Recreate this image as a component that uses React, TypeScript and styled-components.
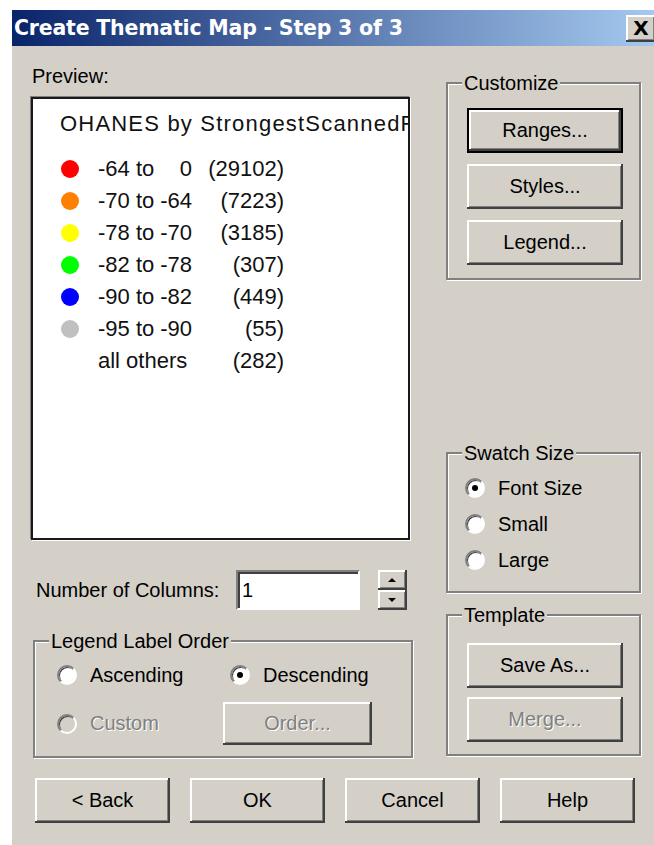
import React from 'react'
import styled, { createGlobalStyle } from 'styled-components'

const GlobalStyle = createGlobalStyle`
  html, body {
    margin: 0;
    padding: 0;
    background: #ffffff;
    overflow: hidden;
  }
`

const FACE = '#d4d0c8'
const SHADOW = '#808080'
const DARK = '#404040'
const UI_FONT = `"Liberation Sans", Arial, sans-serif`

const Dialog = styled.div`
  margin: 10px 0 0 12px;
  width: 648px;
  height: 835px;
  background: ${FACE};
  font-family: ${UI_FONT};
  font-size: 20px;
  color: #000;
`

// TITLE BAR

const TitleBar = styled.div`
  height: 36px;
  display: flex;
  align-items: center;
  padding: 0 4px 0 2px;
  background: linear-gradient(to right, #0a246a, #a6caf0);
`

const TitleText = styled.div`
  color: #ffffff;
  font-family: "DejaVu Sans", Tahoma, sans-serif;
  font-weight: bold;
  font-size: 20.5px;
  letter-spacing: -0.2px;
`

const CloseButton = styled.div`
  margin-left: auto;
  width: 30px;
  height: 27px;
  box-sizing: border-box;
  display: flex;
  align-items: center;
  justify-content: center;
  background: ${FACE};
  font-family: "DejaVu Sans", sans-serif;
  font-weight: bold;
  font-size: 20px;
  box-shadow: inset -2px -2px 0 ${DARK}, inset 2px 2px 0 #ffffff, inset -3px -3px 0 ${SHADOW};
`

// BODY

const Body = styled.div`
  display: flex;
  flex-direction: column;
  padding-left: 19px;
`

const Main = styled.div`
  display: grid;
  grid-template-columns: 382px 195px;
  column-gap: 33px;
  align-items: start;
`

const LeftColumn = styled.div`
  display: flex;
  flex-direction: column;
`

const RightColumn = styled.div`
  display: flex;
  flex-direction: column;
`

const PreviewLabel = styled.div`
  margin-top: 19px;
  padding-left: 1px;
  line-height: 22px;
`

const PreviewBox = styled.div`
  margin-top: 10px;
  width: 379px;
  height: 443px;
  box-sizing: border-box;
  background: #ffffff;
  border: 2px solid #1a1a1a;
  box-shadow: -1px -1px 0 ${SHADOW}, 1px 1px 0 #ffffff;
  padding: 14px 0 0 27px;
  overflow: hidden;
  font-size: 22px;
  color: #111;
`

const LegendTitle = styled.div`
  line-height: 22px;
  white-space: nowrap;
  letter-spacing: 1.2px;
  margin-bottom: 18px;
`

// swatch | range (from, to) | count, right aligned
const LegendRow = styled.div`
  display: grid;
  grid-template-columns: 37px 94px 92px;
  align-items: center;
  height: 32px;
  margin-left: 1px;
  white-space: nowrap;
`

const Swatch = styled.div<{ $color?: string }>`
  width: 18px;
  height: 18px;
  border-radius: 50%;
  background: ${(p) => p.$color ?? 'transparent'};
`

const Range = styled.div`
  display: flex;
  justify-content: space-between;
`

const Count = styled.div`
  text-align: right;
`

const ColumnsRow = styled.div`
  margin-top: 30px;
  height: 40px;
  display: flex;
  align-items: center;
`

const ColumnsLabel = styled.div`
  width: 200px;
  padding-left: 5px;
  white-space: nowrap;
`

const NumberInput = styled.div`
  width: 124px;
  height: 40px;
  box-sizing: border-box;
  background: #ffffff;
  border: 2px solid;
  border-color: ${SHADOW} #ffffff #ffffff ${SHADOW};
  box-shadow: inset 2px 2px 0 ${DARK};
  display: flex;
  align-items: center;
  padding-left: 4px;
`

const Spinner = styled.div`
  margin-left: 18px;
  width: 29px;
  display: flex;
  flex-direction: column;
`

const SpinButton = styled.div<{ $down?: boolean }>`
  height: 20px;
  display: flex;
  align-items: center;
  justify-content: center;
  background: ${FACE};
  box-shadow: inset -2px -2px 0 ${DARK}, inset 2px 2px 0 #ffffff, inset -3px -3px 0 ${SHADOW};

  &::after {
    content: '';
    width: 0;
    height: 0;
    border-left: 4px solid transparent;
    border-right: 4px solid transparent;
    ${(p) => (p.$down ? 'border-top: 4px solid #000;' : 'border-bottom: 4px solid #000;')}
    margin-right: 2px;
  }
`

// GROUP BOXES

const GroupBox = styled.div<{ $top: number }>`
  position: relative;
  margin-top: ${(p) => p.$top}px;
  box-sizing: border-box;
  border: 2px solid ${SHADOW};
  box-shadow: inset 1px 1px 0 #ffffff, 1px 1px 0 #ffffff;
`

const OrderBox = styled(GroupBox)`
  margin-left: 2px;
  width: 380px;
`

const Caption = styled.span`
  position: absolute;
  top: -12px;
  left: 14px;
  padding: 0 2px;
  line-height: 22px;
  background: ${FACE};
  white-space: nowrap;
`

const ButtonStack = styled.div<{ $pad: string; $gap: number }>`
  display: flex;
  flex-direction: column;
  gap: ${(p) => p.$gap}px;
  padding: ${(p) => p.$pad};
`

const Button = styled.button<{ $default?: boolean; $w?: number; $h?: number }>`
  width: ${(p) => p.$w ?? 156}px;
  height: ${(p) => p.$h ?? 45}px;
  box-sizing: border-box;
  margin: 0;
  padding: 0;
  background: ${FACE};
  font-family: ${UI_FONT};
  font-size: 20px;
  color: #000;
  border: ${(p) => (p.$default ? '2px solid #000' : 'none')};
  box-shadow: inset -2px -2px 0 ${DARK}, inset 2px 2px 0 #ffffff, inset -3px -3px 0 ${SHADOW};

  &:disabled {
    color: ${SHADOW};
    text-shadow: 1px 1px 0 #ffffff;
  }
`

const RadioList = styled.div`
  display: flex;
  flex-direction: column;
  gap: 12px;
  padding: 22px 0 19px 17px;
`

const OrderGrid = styled.div`
  display: grid;
  grid-template-columns: 166px 149px;
  row-gap: 15px;
  align-items: center;
  padding: 21px 0 11px 22px;
`

const RadioItem = styled.label<{ $disabled?: boolean; $indent?: number }>`
  display: flex;
  align-items: center;
  gap: 13px;
  height: 24px;
  margin-left: ${(p) => p.$indent ?? 0}px;
  white-space: nowrap;
  color: ${(p) => (p.$disabled ? SHADOW : '#000')};
  text-shadow: ${(p) => (p.$disabled ? '1px 1px 0 #ffffff' : 'none')};
`

const RadioCircle = styled.span<{ $checked?: boolean; $disabled?: boolean }>`
  width: 20px;
  height: 20px;
  box-sizing: border-box;
  border-radius: 50%;
  border: 2px solid;
  border-color: ${SHADOW} #ffffff #ffffff ${SHADOW};
  box-shadow: inset 1px 1px 0 ${DARK};
  background: ${(p) => (p.$disabled ? FACE : '#ffffff')};
  display: flex;
  align-items: center;
  justify-content: center;

  &::after {
    content: '';
    width: 6px;
    height: 6px;
    border-radius: 50%;
    background: ${(p) => (p.$checked ? '#000' : 'transparent')};
  }
`

const Footer = styled.div`
  margin-top: 20px;
  margin-left: 4px;
  display: flex;
  gap: 20px;
`

type Radio = { label: string; checked?: boolean; disabled?: boolean }

const RadioOption = ({ label, checked, disabled, indent }: Radio & { indent?: number }) => (
  <RadioItem $disabled={disabled} $indent={indent}>
    <RadioCircle $checked={checked} $disabled={disabled} />
    {label}
  </RadioItem>
)

const legend = [
  { color: '#ff0000', from: '-64 to', to: '0', count: '(29102)' },
  { color: '#ff8000', from: '-70 to', to: '-64', count: '(7223)' },
  { color: '#ffff00', from: '-78 to', to: '-70', count: '(3185)' },
  { color: '#00ff00', from: '-82 to', to: '-78', count: '(307)' },
  { color: '#0000ff', from: '-90 to', to: '-82', count: '(449)' },
  { color: '#c0c0c0', from: '-95 to', to: '-90', count: '(55)' },
]

const swatchSizes: Radio[] = [
  { label: 'Font Size', checked: true },
  { label: 'Small' },
  { label: 'Large' },
]

export default function App(): JSX.Element {
  return (
    <>
      <GlobalStyle />
      <Dialog>
        <TitleBar>
          <TitleText>Create Thematic Map - Step 3 of 3</TitleText>
          <CloseButton>X</CloseButton>
        </TitleBar>
        <Body>
          <Main>
            <LeftColumn>
              <PreviewLabel>Preview:</PreviewLabel>
              <PreviewBox>
                <LegendTitle>OHANES by StrongestScannedRSSI</LegendTitle>
                {legend.map((row) => (
                  <LegendRow key={row.from}>
                    <Swatch $color={row.color} />
                    <Range>
                      <span>{row.from}</span>
                      <span>{row.to}</span>
                    </Range>
                    <Count>{row.count}</Count>
                  </LegendRow>
                ))}
                <LegendRow>
                  <Swatch />
                  <Range>all others</Range>
                  <Count>(282)</Count>
                </LegendRow>
              </PreviewBox>

              <ColumnsRow>
                <ColumnsLabel>Number of Columns:</ColumnsLabel>
                <NumberInput>1</NumberInput>
                <Spinner>
                  <SpinButton />
                  <SpinButton $down />
                </Spinner>
              </ColumnsRow>

              <OrderBox $top={30}>
                <Caption>Legend Label Order</Caption>
                <OrderGrid>
                  <RadioOption label="Ascending" />
                  <RadioOption label="Descending" checked indent={7} />
                  <RadioOption label="Custom" disabled />
                  <Button $w={149} $h={43} disabled>
                    Order...
                  </Button>
                </OrderGrid>
              </OrderBox>
            </LeftColumn>

            <RightColumn>
              <GroupBox $top={36}>
                <Caption>Customize</Caption>
                <ButtonStack $pad="24px 0 13px 19px" $gap={11}>
                  <Button $default>Ranges...</Button>
                  <Button>Styles...</Button>
                  <Button>Legend...</Button>
                </ButtonStack>
              </GroupBox>

              <GroupBox $top={172}>
                <Caption>Swatch Size</Caption>
                <RadioList>
                  {swatchSizes.map((r) => (
                    <RadioOption key={r.label} {...r} />
                  ))}
                </RadioList>
              </GroupBox>

              <GroupBox $top={21}>
                <Caption>Template</Caption>
                <ButtonStack $pad="27px 0 12px 19px" $gap={9}>
                  <Button>Save As...</Button>
                  <Button disabled>Merge...</Button>
                </ButtonStack>
              </GroupBox>
            </RightColumn>
          </Main>

          <Footer>
            <Button $w={135}>&lt; Back</Button>
            <Button $w={135}>OK</Button>
            <Button $w={135}>Cancel</Button>
            <Button $w={135}>Help</Button>
          </Footer>
        </Body>
      </Dialog>
    </>
  )
}
